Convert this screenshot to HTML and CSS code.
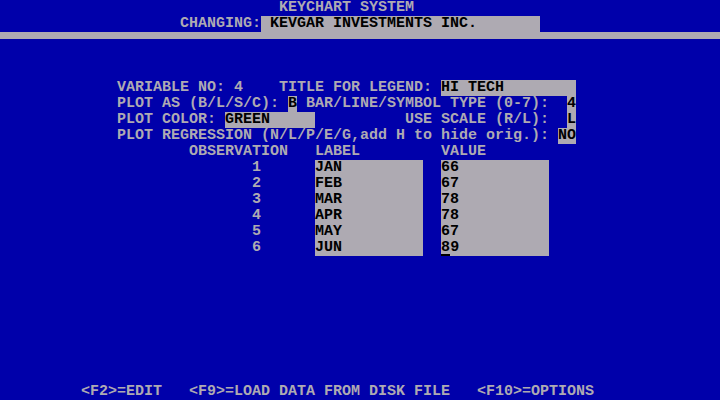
FILE: index.html
```html
<!DOCTYPE html>
<html lang="en">
<head>
    <meta charset="UTF-8">
    <meta name="viewport" content="width=device-width, initial-scale=1.0">
    <title>KEYCHART SYSTEM</title>
    <link rel="stylesheet" href="styles.css">
</head>
<body>
    <div class="screen">
        <div class="row">                               KEYCHART SYSTEM</div>
        <div class="row">                    CHANGING:<span class="field"> KEVGAR INVESTMENTS INC.       </span></div>
        <div class="row"><div class="bar"></div></div>
        <div class="row"></div>
        <div class="row"></div>
        <div class="row">             VARIABLE NO: 4    TITLE FOR LEGEND: <span class="field">HI TECH        </span></div>
        <div class="row">             PLOT AS (B/L/S/C): <span class="field">B</span> BAR/LINE/SYMBOL TYPE (0-7):  <span class="field">4</span></div>
        <div class="row">             PLOT COLOR: <span class="field">GREEN     </span>          USE SCALE (R/L):  <span class="field">L</span></div>
        <div class="row">             PLOT REGRESSION (N/L/P/E/G,add H to hide orig.): <span class="field">NO</span></div>
        <div class="row">                     OBSERVATION   LABEL         VALUE</div>
        <div class="row">                            1      <span class="field">JAN         </span>  <span class="field">66          </span></div>
        <div class="row">                            2      <span class="field">FEB         </span>  <span class="field">67          </span></div>
        <div class="row">                            3      <span class="field">MAR         </span>  <span class="field">78          </span></div>
        <div class="row">                            4      <span class="field">APR         </span>  <span class="field">78          </span></div>
        <div class="row">                            5      <span class="field">MAY         </span>  <span class="field">67          </span></div>
        <div class="row">                            6      <span class="field">JUN         </span>  <span class="field"><span class="cursor">8</span>9          </span></div>
        <div class="row"></div>
        <div class="row"></div>
        <div class="row"></div>
        <div class="row"></div>
        <div class="row"></div>
        <div class="row"></div>
        <div class="row"></div>
        <div class="row"></div>
        <div class="row">         &lt;F2&gt;=EDIT   &lt;F9&gt;=LOAD DATA FROM DISK FILE   &lt;F10&gt;=OPTIONS</div>
    </div>
</body>
</html>
```
FILE: styles.css
```css
body{
    margin: 0;
    background: #0000aa;
}
.screen {
    width: 720px;
    height: 400px;
    display: flex;
    flex-direction: column;
    background: #0000aa;
    color: #aeaab2;
    font-family: "Liberation Mono", "DejaVu Sans Mono", monospace;
    font-size: 15px;
    font-weight: bold;
}
.row {
    height: 16px;
    line-height: 16px;
    white-space: pre;
    overflow: hidden;
}
.bar {
    height: 7px;
    background: #aeaab2;
}
.field {
    display: inline-block;
    height: 16px;
    background: #aeaab2;
    color: #000000;
    vertical-align: top;
}
.cursor {
    display: inline-block;
    box-shadow: inset 0 -2px 0 #000000;
}
```
